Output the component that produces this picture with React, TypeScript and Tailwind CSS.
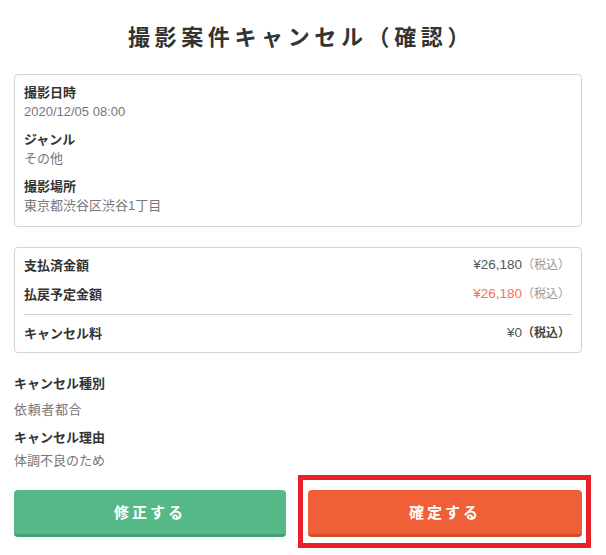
import React from "react";

const font = { fontFamily: '"Liberation Sans", "Noto Sans CJK JP", sans-serif' };

function Field({ label, value, first }: { label: string; value: string; first?: boolean }) {
  return (
    <div className={first ? "" : "mt-[9px]"}>
      <div className="text-[13px] leading-[19px] font-bold text-[#333]">{label}</div>
      <div className="text-[13px] leading-[19px] text-[#777]">{value}</div>
    </div>
  );
}

function Amount({ label, amount, red, boldTax }: { label: string; amount: string; red?: boolean; boldTax?: boolean }) {
  return (
    <div className="flex h-[29px] items-center justify-between">
      <span className="text-[13px] font-bold text-[#333]">{label}</span>
      <span className="flex items-baseline pr-[2px]">
        <span className={"text-[13.5px] " + (red ? "text-[#f0735c]" : "text-[#555]")}>{amount}</span>
        <span className={"text-[12px] " + (boldTax ? "font-bold text-[#444]" : "text-[#999]")}>（税込）</span>
      </span>
    </div>
  );
}

export default function App() {
  return (
    <div className="w-[606px] h-[555px] bg-white overflow-hidden" style={font}>
      <div className="pl-[14px] pr-[24px]">
        <h1 className="pt-[24px] h-[74px] text-center text-[22px] leading-[28px] font-semibold tracking-[0.21em] text-[#333] pl-[6px]">
          撮影案件キャンセル（確認）
        </h1>
        <div className="rounded-[4px] border border-[#d4d4d4] px-[9px] pt-[8px] pb-[11px]">
          <Field first label="撮影日時" value="2020/12/05 08:00" />
          <Field label="ジャンル" value="その他" />
          <Field label="撮影場所" value="東京都渋谷区渋谷1丁目" />
        </div>
        <div className="mt-[20px] rounded-[4px] border border-[#d4d4d4] px-[9px] pt-[3px] pb-[4px]">
          <Amount label="支払済金額" amount="¥26,180" />
          <Amount label="払戻予定金額" amount="¥26,180" red />
          <div className="mt-[5px] mb-[4px] h-px bg-[#cfcfcf]" />
          <Amount label="キャンセル料" amount="¥0" boldTax />
        </div>
        <div className="mt-[21px] text-[13px] leading-[19px] font-bold text-[#333]">キャンセル種別</div>
        <div className="mt-[7px] text-[13px] leading-[19px] text-[#777] tracking-[0.05em]">依頼者都合</div>
        <div className="mt-[9px] text-[13px] leading-[19px] font-bold text-[#333]">キャンセル理由</div>
        <div className="mt-[4px] text-[13px] leading-[19px] text-[#777]">体調不良のため</div>
        <div className="mt-[20px] flex gap-[22px]">
          <button className="flex h-[47px] w-[272px] items-center justify-center rounded-[4px] border-b-[3px] border-[#44a072] bg-[#55b987] pt-[2px] text-[15px] font-bold tracking-[0.2em] text-white">
            修正する
          </button>
          <div className="relative">
            <button className="flex h-[47px] w-[274px] items-center justify-center rounded-[4px] border-b-[3px] border-[#d14d2b] bg-[#f15f38] pt-[2px] text-[15px] font-bold tracking-[0.2em] text-white">
              確定する
            </button>
            <div className="pointer-events-none absolute -left-[10px] -top-[15px] -right-[9px] -bottom-[11px] border-[5px] border-[#e8202a]" />
          </div>
        </div>
      </div>
    </div>
  );
}
